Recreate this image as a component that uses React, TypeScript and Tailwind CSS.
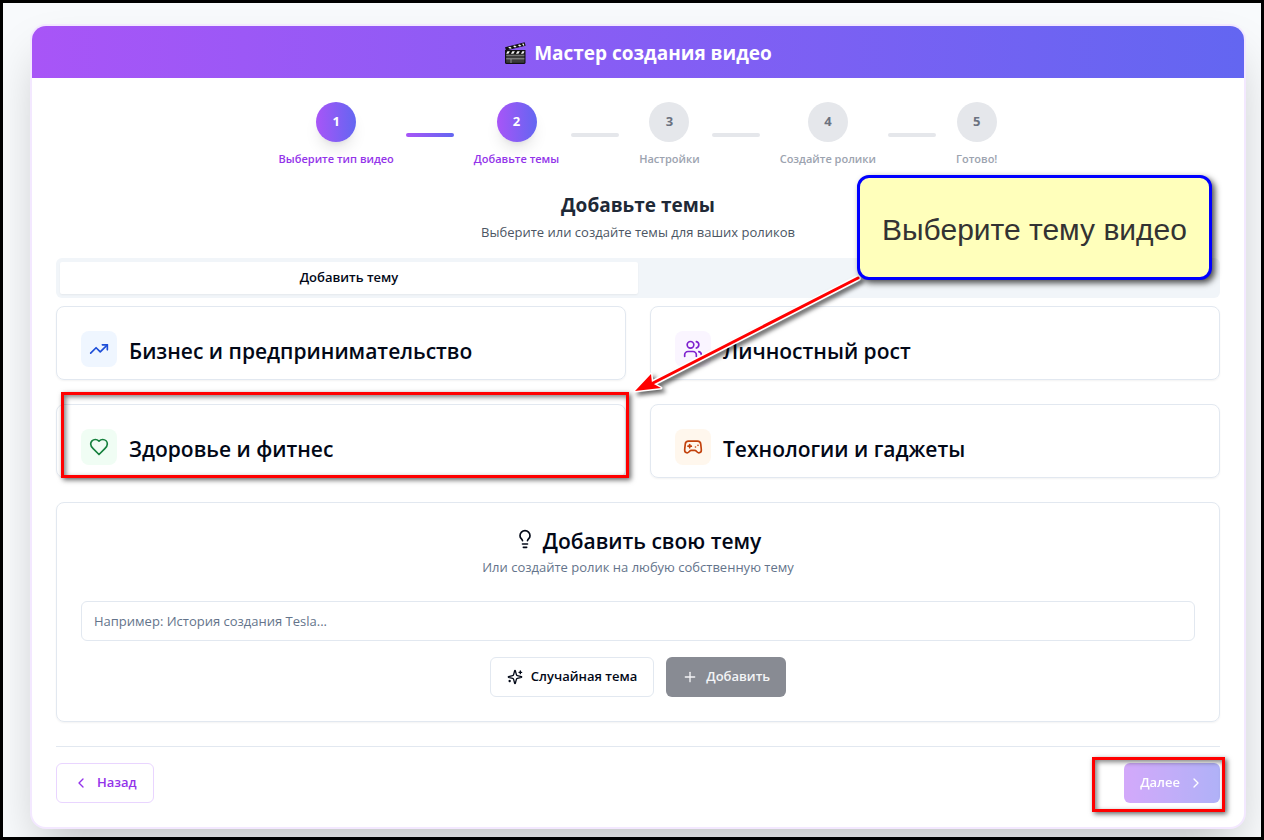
import { clsx } from "clsx";
import {
  ChevronLeft,
  ChevronRight,
  Gamepad2,
  Lightbulb,
  Plus,
  TrendingUp,
  Users,
} from "lucide-react";
import React, { ComponentType, Fragment, useState } from "react";

interface IconProps {
  className?: string;
}

interface Topic {
  title: string;
  icon: ComponentType<IconProps>;
  color: string;
  marked?: boolean;
}

const Heart = ({ className }: IconProps) => (
  <svg
    viewBox="0 0 24 24"
    fill="none"
    stroke="currentColor"
    strokeWidth="2"
    strokeLinecap="round"
    strokeLinejoin="round"
    className={className}
    aria-hidden="true"
  >
    <path d="M19 14c1.49-1.46 3-3.21 3-5.5A5.5 5.5 0 0 0 16.5 3c-1.76 0-3 .5-4.5 2-1.5-1.5-2.74-2-4.5-2A5.5 5.5 0 0 0 2 8.5c0 2.3 1.5 4.05 3 5.5l7 7Z" />
  </svg>
);

const Sparkles = ({ className }: IconProps) => (
  <svg
    viewBox="0 0 24 24"
    fill="none"
    stroke="currentColor"
    strokeWidth="2"
    strokeLinecap="round"
    strokeLinejoin="round"
    className={className}
    aria-hidden="true"
  >
    <path d="M9.937 15.5A2 2 0 0 0 8.5 14.063l-6.135-1.582a.5.5 0 0 1 0-.962L8.5 9.936A2 2 0 0 0 9.937 8.5l1.582-6.135a.5.5 0 0 1 .963 0L14.063 8.5A2 2 0 0 0 15.5 9.937l6.135 1.581a.5.5 0 0 1 0 .964L15.5 14.063a2 2 0 0 0-1.437 1.437l-1.582 6.135a.5.5 0 0 1-.963 0z" />
    <path d="M20 3v4M22 5h-4M4 17v2M5 18H3" />
  </svg>
);

const Clapperboard = () => (
  <svg viewBox="0 0 22 24" className="w-[22px] h-6" aria-hidden="true">
    <path d="M1 6.2 20.6 1.2 21.6 4.8 2 9.6z" fill="#111" />
    <path d="M1 9h20.5v12.4a1.6 1.6 0 0 1-1.6 1.6H2.6A1.6 1.6 0 0 1 1 21.4z" fill="#111" />
    <path
      d="M4.2 6.3 6.2 5.8 7.9 7.3 5.9 7.8zM9 5.1l2-.5 1.7 1.5-2 .5zM13.8 3.9l2-.5 1.7 1.5-2 .5zM18 2.8l1.6-.4.8 2-1 .3z"
      fill="#f1f1f1"
    />
    <path
      d="M3.4 10.3h2.5l-1.5 2.5H2.2zM8.4 10.3h2.5l-1.5 2.5H6.9zM13.4 10.3h2.5l-1.5 2.5h-2.5zM18.4 10.3h1.9v.8l-1 1.7h-2.4z"
      fill="#f1f1f1"
    />
    <path d="M2.2 14.5h18.2v7.3H2.2z" fill="#3b3b3b" />
    <path d="M2.2 14.2h18.2M2.2 17.8h18.2" stroke="#a3a3a3" strokeWidth=".9" />
    <path d="M7 18v4" stroke="#a3a3a3" strokeWidth=".8" />
  </svg>
);

const steps = [
  "Выберите тип видео",
  "Добавьте темы",
  "Настройки",
  "Создайте ролики",
  "Готово!",
];

const topics: Topic[] = [
  {
    title: "Бизнес и предпринимательство",
    icon: TrendingUp,
    color: "bg-[#eff6ff] text-[#1d4ed8]",
  },
  {
    title: "Личностный рост",
    icon: Users,
    color: "bg-[#faf5ff] text-[#7e22ce]",
  },
  {
    title: "Здоровье и фитнес",
    icon: Heart,
    color: "bg-[#f0fdf4] text-[#15803d]",
    marked: true,
  },
  {
    title: "Технологии и гаджеты",
    icon: Gamepad2,
    color: "bg-[#fff7ed] text-[#c2410c]",
  },
];

const Marker = ({ className }: { className: string }) => (
  <div
    className={clsx(
      "absolute pointer-events-none border-3 border-[#ff0000] shadow-[2px_2px_5px_rgba(0,0,0,0.6),inset_2px_2px_5px_rgba(0,0,0,0.5)]",
      className
    )}
  />
);

const Stepper = ({ current }: { current: number }) => (
  <div className="flex items-center justify-center">
    {steps.map((label, i) => (
      <Fragment key={label}>
        {i > 0 && (
          <div
            className={clsx(
              "w-12 h-1 ml-3 mr-5 rounded-full",
              i < current
                ? "bg-linear-to-r/srgb from-[#a855f7] to-[#6366f1]"
                : "bg-[#e5e7eb]"
            )}
          />
        )}
        <div className="flex flex-col items-center gap-2">
          <div
            className={clsx(
              "w-10 h-10 rounded-full flex items-center justify-center text-[13px] font-bold",
              i < current
                ? "bg-linear-to-r/srgb from-[#a855f7] to-[#6366f1] text-white shadow-lg"
                : "bg-[#e5e7eb] text-[#6b7280]"
            )}
          >
            {i + 1}
          </div>
          <span
            className={clsx(
              "text-[11px] leading-[17px] font-semibold",
              i < current ? "text-[#9333ea]" : "text-[#9ca3af]"
            )}
          >
            {label}
          </span>
        </div>
      </Fragment>
    ))}
  </div>
);

const TopicCard = ({ topic }: { topic: Topic }) => {
  const Icon = topic.icon;
  return (
    <div className="relative rounded-lg border border-[#e2e8f0] shadow-xs px-6 pt-6 pb-3">
      <div className="flex items-center gap-3">
        <div className={clsx("p-2 rounded-lg", topic.color)}>
          <Icon className="w-5 h-5" />
        </div>
        <h3 className="pt-1 text-[21px] leading-7 font-semibold">{topic.title}</h3>
      </div>
      {topic.marked && <Marker className="left-1 -right-1 -top-[13px] -bottom-px" />}
    </div>
  );
};

const App = () => {
  const [tab, setTab] = useState("add");
  const [custom, setCustom] = useState("");

  return (
    <div className="min-h-screen border-3 border-black bg-[#f8fafc] pl-[27px] pr-[15px] pt-[21px] pb-2 font-['Open_Sans','Noto_Sans',sans-serif] text-[#020817] overflow-hidden">
      <div className="rounded-2xl border-2 border-[#f3e8ff] bg-white shadow-2xl">
        <header className="rounded-t-[14px] bg-linear-to-r/srgb from-[#a855f7] to-[#6366f1] px-6 pt-[13px] pb-[11px] flex items-center justify-center gap-2">
          <Clapperboard />
          <h1 className="text-[19px] leading-7 font-bold text-white">
            Мастер создания видео
          </h1>
        </header>

        <main className="p-6">
          <Stepper current={2} />

          <div className="mt-6 text-center">
            <h2 className="text-[19px] leading-7 font-bold text-[#1f2937]">
              Добавьте темы
            </h2>
            <p className="mt-[3px] text-[13px] leading-5 text-[#4b5563]">
              Выберите или создайте темы для ваших роликов
            </p>
          </div>

          <div className="relative mt-4">
            <div className="grid grid-cols-2 h-10 p-1 rounded-md bg-[#f1f5f9] text-[13px] font-semibold">
              <button
                onClick={() => setTab("add")}
                className={clsx("rounded-xs", tab === "add" && "bg-white shadow-xs")}
              >
                Добавить тему
              </button>
              <button
                aria-label="Мои темы"
                onClick={() => setTab("list")}
                className={clsx("rounded-xs", tab === "list" && "bg-white shadow-xs")}
              />
            </div>

            {/* hint with an arrow to the topic */}
            <svg
              viewBox="0 0 240 130"
              className="absolute z-10 left-1/2 top-2 ml-[-13px] w-60 h-[130px] pointer-events-none drop-shadow-[3px_3px_2px_rgba(0,0,0,0.6)]"
              aria-hidden="true"
            >
              <path d="M233 12 28 117" stroke="#fff" strokeWidth="6" strokeLinecap="round" />
              <path
                d="M10 125 26 108 27 117 36 122z"
                fill="#fff"
                stroke="#fff"
                strokeWidth="3"
                strokeLinejoin="round"
              />
              <path d="M233 12 28 117" stroke="#f00" strokeWidth="3" strokeLinecap="round" />
              <path d="M10 125 26 108 27 117 36 122z" fill="#f00" />
            </svg>
            <div className="absolute z-20 right-2 -top-[83px] w-[355px] h-[105px] pt-1 flex items-center justify-center rounded-xl border-3 border-[#0000ff] bg-[#ffffbb] shadow-[3px_3px_6px_rgba(0,0,0,0.7)] font-['Liberation_Sans',Arial,sans-serif] text-3xl text-[#333333] whitespace-nowrap">
              Выберите тему видео
            </div>
          </div>

          <div className="mt-2 grid grid-cols-2 gap-6">
            {topics.map((topic) => (
              <TopicCard key={topic.title} topic={topic} />
            ))}
          </div>

          <section className="mt-6 rounded-lg border border-[#e2e8f0] shadow-xs p-6">
            <div className="flex items-start justify-center gap-2">
              <Lightbulb className="mt-0.5 w-5 h-5" />
              <h3 className="text-[21px] leading-7 font-semibold">Добавить свою тему</h3>
            </div>
            <p className="text-center text-[13px] leading-6 text-[#64748b]">
              Или создайте ролик на любую собственную тему
            </p>
            <input
              type="text"
              aria-label="Добавить свою тему"
              value={custom}
              onChange={(e) => setCustom(e.target.value)}
              placeholder="Например: История создания Tesla..."
              className="mt-[22px] block w-full h-10 px-3 rounded-md border border-[#e2e8f0] text-[13px] placeholder:text-[#64748b]"
            />
            <div className="mt-4 flex justify-center gap-3">
              <button className="h-10 px-4 flex items-center gap-2 rounded-md border border-[#e2e8f0] text-[13px] font-semibold">
                <Sparkles className="w-4 h-4" />
                Случайная тема
              </button>
              <button className="h-10 px-4 flex items-center gap-2 rounded-md bg-[#888b93] text-[13px] font-semibold text-[#f3f4f6]">
                <Plus className="w-4 h-4" />
                Добавить
              </button>
            </div>
          </section>

          <footer className="mt-6 pt-4 border-t border-[#e2e8f0] flex justify-between">
            <button className="h-10 px-4 flex items-center gap-2 rounded-md border border-[#e9d5ff] text-[13px] font-semibold text-[#9333ea]">
              <ChevronLeft className="w-4 h-4" />
              Назад
            </button>
            <div className="relative">
              <button className="h-10 px-4 flex items-center gap-2 rounded-md bg-linear-to-r/srgb from-[#a855f7] to-[#6366f1] text-[13px] font-semibold text-white opacity-50">
                Далее
                <ChevronRight className="w-4 h-4" />
              </button>
              <Marker className="-left-8 -right-[5px] -top-1.5 -bottom-[9px]" />
            </div>
          </footer>
        </main>
      </div>
    </div>
  );
};

export default App;
